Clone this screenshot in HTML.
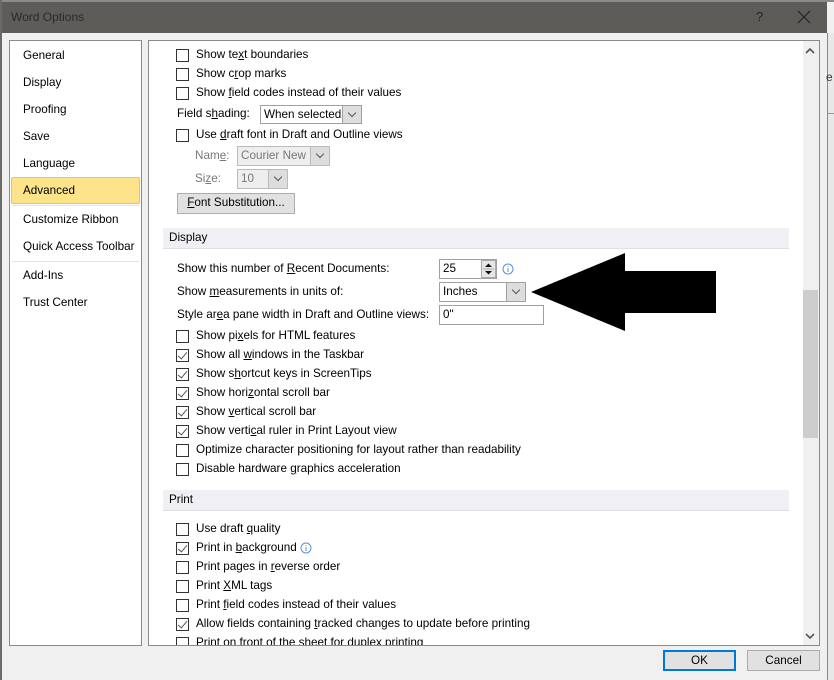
<!DOCTYPE html>
<html><head><meta charset="utf-8"><style>
*{margin:0;padding:0;box-sizing:border-box}
body{width:834px;height:680px;position:relative;overflow:hidden;background:#f0f0f0;font-family:"Liberation Sans",sans-serif;font-size:11.7px;color:#000}
.a{position:absolute;white-space:nowrap}
.cb{position:absolute;width:13px;height:13px;border:1px solid #333;background:#fff}
.cb.c::after{content:"";position:absolute;left:3px;top:0px;width:4px;height:8px;border-right:1px solid #555;border-bottom:1px solid #555;transform:rotate(40deg)}
.t{position:absolute;white-space:nowrap;line-height:14px}
.nav{position:absolute;left:23px;line-height:14px}
.sec{position:absolute;left:163px;width:626px;height:21px;background:#f0f0f4;border-bottom:1px solid #e0e0e4;padding:3px 0 0 6px;font-weight:normal}
.dd{position:absolute;border:1px solid #a0a0a0;background:#fff;padding:2px 0 0 3px;line-height:14px;overflow:hidden}
.dd .ar{position:absolute;right:0;top:0;bottom:0;width:19px;background:#ddd;border-left:1px solid #a0a0a0}
.dd .ar::after{content:"";position:absolute;left:6px;top:4px;width:5px;height:5px;border-right:1px solid #555;border-bottom:1px solid #555;transform:rotate(45deg)}
.btn{position:absolute;background:#e1e1e1;border:1px solid #adadad;text-align:center;line-height:18px}
</style></head><body>
<div class="a" style="left:0;top:0;width:834px;height:2px;background:#8a8a8a"></div>
<div class="a" style="left:0;top:0;width:2px;height:680px;background:#6a6a6a"></div>
<div class="a" style="left:2px;top:2px;width:825px;height:31px;background:#5e5c59"></div>
<div class="a" style="left:11px;top:10px;font-size:12px;color:#2a2a2a">Word Options</div>
<div class="a" style="left:756px;top:9px;font-size:13px;color:#222">?</div>
<svg class="a" style="left:797px;top:10px" width="14" height="14"><path d="M1 1L13 13M13 1L1 13" stroke="#222" stroke-width="1.2"/></svg>
<div class="a" style="left:827px;top:33px;width:7px;height:647px;background:#e8e8e8;border-left:1px solid #888"></div>
<div class="a" style="left:826px;top:70px;font-size:12px;color:#333">e</div>
<div class="a" style="left:827px;top:113px;width:7px;height:1px;background:#999"></div>

<div class="a" style="left:9px;top:40px;width:133px;height:606px;background:#fff;border:1px solid #8a8a8a"></div>
<div class="nav" style="top:49px">General</div>
<div class="nav" style="top:76px">Display</div>
<div class="nav" style="top:103px">Proofing</div>
<div class="nav" style="top:130px">Save</div>
<div class="nav" style="top:157px">Language</div>
<div class="a" style="left:11px;top:177px;width:129px;height:27px;background:#fde38a;border:1px solid #f0c350;border-radius:2px"></div>
<div class="nav" style="top:184px">Advanced</div>
<div class="a" style="left:12px;top:205px;width:127px;height:1px;background:#e3e3e3"></div>
<div class="nav" style="top:213px">Customize Ribbon</div>
<div class="nav" style="top:240px">Quick Access Toolbar</div>
<div class="a" style="left:12px;top:261px;width:127px;height:1px;background:#e3e3e3"></div>
<div class="nav" style="top:269px">Add-Ins</div>
<div class="nav" style="top:296px">Trust Center</div>

<div class="a" style="left:148px;top:40px;width:672px;height:606px;background:#fff;border:1px solid #8a8a8a;overflow:hidden"></div>
<div class="a" style="left:803px;top:41px;width:16px;height:604px;background:#f0f0f0"></div>
<div class="a" style="left:803px;top:290px;width:15px;height:148px;background:#cdcdcd"></div>
<svg class="a" style="left:805px;top:47px" width="10" height="8"><path d="M1 6L5 2L9 6" stroke="#555" stroke-width="1.6" fill="none"/></svg>
<svg class="a" style="left:805px;top:632px" width="10" height="8"><path d="M1 2L5 6L9 2" stroke="#555" stroke-width="1.6" fill="none"/></svg>

<div class="cb" style="left:176px;top:49px"></div><div class="t" style="left:196px;top:48px">Show te<u>x</u>t boundaries</div>
<div class="cb" style="left:176px;top:68px"></div><div class="t" style="left:196px;top:67px">Show c<u>r</u>op marks</div>
<div class="cb" style="left:176px;top:87px"></div><div class="t" style="left:196px;top:86px">Show <u>f</u>ield codes instead of their values</div>
<div class="t" style="left:177px;top:107px">Field s<u>h</u>ading:</div>
<div class="dd" style="left:260px;top:105px;width:102px;height:19px">When selected<span class="ar"></span></div>
<div class="cb" style="left:176px;top:129px"></div><div class="t" style="left:196px;top:128px">Use <u>d</u>raft font in Draft and Outline views</div>
<div class="t" style="left:195px;top:149px;color:#777">Nam<u>e</u>:</div>
<div class="dd" style="left:237px;top:146px;width:93px;height:20px;background:#eee;color:#777;border-color:#bbb">Courier New<span class="ar" style="background:#ddd;border-color:#bbb"></span></div>
<div class="t" style="left:195px;top:172px;color:#777">Si<u>z</u>e:</div>
<div class="dd" style="left:237px;top:169px;width:51px;height:20px;background:#eee;color:#777;border-color:#bbb">10<span class="ar" style="background:#ddd;border-color:#bbb"></span></div>
<div class="btn" style="left:177px;top:193px;width:118px;height:21px"><u>F</u>ont Substitution...</div>

<div class="sec" style="top:228px">Display</div>
<div class="t" style="left:177px;top:262px">Show this number of <u>R</u>ecent Documents:</div>
<div class="a" style="left:439px;top:259px;width:58px;height:20px;border:1px solid #a0a0a0;background:#fff;padding:2px 0 0 3px">25</div>
<div class="a" style="left:481px;top:260px;width:15px;height:18px;background:#e6e6e6;border:1px solid #aaa"></div>
<svg class="a" style="left:483px;top:261px" width="11" height="16"><path d="M2 6L5.5 2.5L9 6Z M2 10L5.5 13.5L9 10Z" fill="#111"/><path d="M0 8H11" stroke="#aaa"/></svg>
<svg class="a" style="left:502px;top:263px" width="12" height="12"><circle cx="6" cy="6" r="5" fill="none" stroke="#5a8fd8"/><path d="M6 5V9M6 3V4" stroke="#5a8fd8"/></svg>
<div class="t" style="left:177px;top:285px">Show <u>m</u>easurements in units of:</div>
<div class="dd" style="left:439px;top:282px;width:87px;height:20px">Inches<span class="ar"></span></div>
<div class="t" style="left:177px;top:308px">Style ar<u>e</u>a pane width in Draft and Outline views:</div>
<div class="a" style="left:439px;top:305px;width:105px;height:20px;border:1px solid #a0a0a0;background:#fff;padding:2px 0 0 3px">0"</div>
<svg class="a" style="left:520px;top:245px" width="200" height="100"><polygon points="11,47 105,8 105,26 196,26 196,68 105,68 105,86" fill="#000"/></svg>

<div class="cb" style="left:176px;top:330px"></div><div class="t" style="left:196px;top:329px">Show pi<u>x</u>els for HTML features</div>
<div class="cb c" style="left:176px;top:349px"></div><div class="t" style="left:196px;top:348px">Show all <u>w</u>indows in the Taskbar</div>
<div class="cb c" style="left:176px;top:368px"></div><div class="t" style="left:196px;top:367px">Show s<u>h</u>ortcut keys in ScreenTips</div>
<div class="cb c" style="left:176px;top:387px"></div><div class="t" style="left:196px;top:386px">Show hori<u>z</u>ontal scroll bar</div>
<div class="cb c" style="left:176px;top:406px"></div><div class="t" style="left:196px;top:405px">Show <u>v</u>ertical scroll bar</div>
<div class="cb c" style="left:176px;top:425px"></div><div class="t" style="left:196px;top:424px">Show verti<u>c</u>al ruler in Print Layout view</div>
<div class="cb" style="left:176px;top:444px"></div><div class="t" style="left:196px;top:443px">Optimize character positioning for layout rather than readability</div>
<div class="cb" style="left:176px;top:463px"></div><div class="t" style="left:196px;top:462px">Disable hardware <u>g</u>raphics acceleration</div>

<div class="sec" style="top:490px">Print</div>
<div class="cb" style="left:176px;top:523px"></div><div class="t" style="left:196px;top:522px">Use draft <u>q</u>uality</div>
<div class="cb c" style="left:176px;top:542px"></div><div class="t" style="left:196px;top:541px">Print in <u>b</u>ackground</div>
<svg class="a" style="left:300px;top:542px" width="12" height="12"><circle cx="6" cy="6" r="5" fill="none" stroke="#5a8fd8"/><path d="M6 5V9M6 3V4" stroke="#5a8fd8"/></svg>
<div class="cb" style="left:176px;top:561px"></div><div class="t" style="left:196px;top:560px">Print pages in <u>r</u>everse order</div>
<div class="cb" style="left:176px;top:580px"></div><div class="t" style="left:196px;top:579px">Print <u>X</u>ML tags</div>
<div class="cb" style="left:176px;top:599px"></div><div class="t" style="left:196px;top:598px">Print <u>f</u>ield codes instead of their values</div>
<div class="cb c" style="left:176px;top:618px"></div><div class="t" style="left:196px;top:617px">Allow fields containing <u>t</u>racked changes to update before printing</div>
<div class="a" style="left:149px;top:636px;width:654px;height:9px;overflow:hidden">
<div class="cb" style="left:27px;top:1px"></div><div class="t" style="left:47px;top:0px">Print on front of the sheet for duplex printing</div></div>

<div class="btn" style="left:663px;top:650px;width:73px;height:21px;border:2px solid #0078d7;line-height:17px">OK</div>
<div class="btn" style="left:747px;top:650px;width:73px;height:21px;line-height:19px">Cancel</div>
</body></html>
